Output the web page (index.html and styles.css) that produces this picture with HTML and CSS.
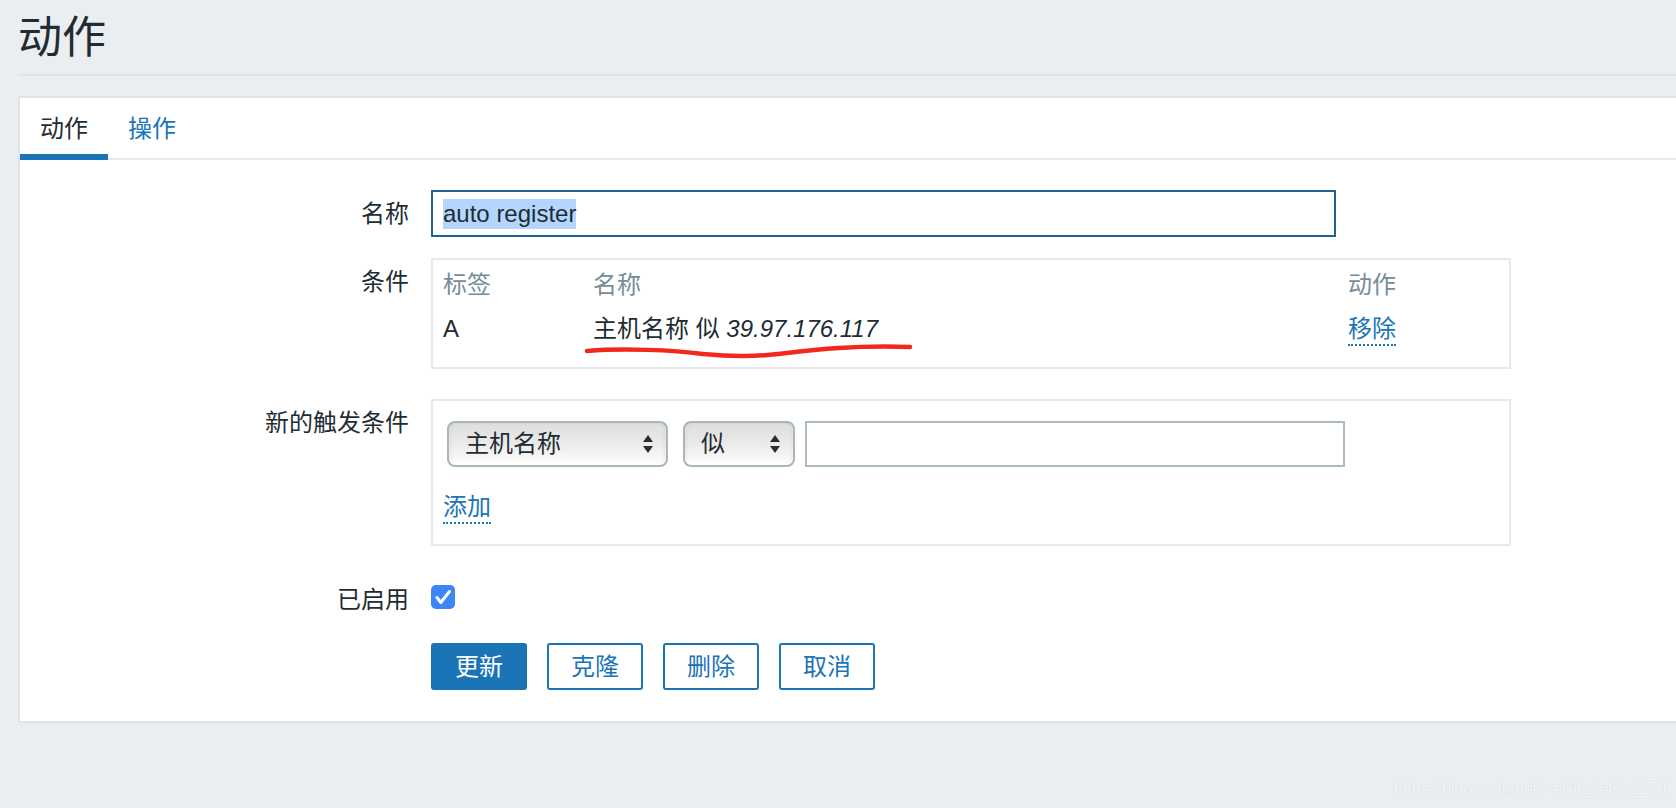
FILE: index.html
```html
<!DOCTYPE html>
<html lang="zh-CN">
<head>
<meta charset="utf-8">
<title>动作</title>
<link rel="stylesheet" href="styles.css">
</head>
<body>
<div class="page">
  <header class="page-header">
    <h1 class="page-title">动作</h1>
  </header>

  <main class="panel">
    <nav class="tabs">
      <a class="tab tab-active">动作</a>
      <a class="tab">操作</a>
    </nav>

    <div class="form">
      <div class="form-row row-name">
        <div class="label">名称</div>
        <div class="field">
          <div class="text-input name-input is-focused"><span class="selection">auto register</span></div>
        </div>
      </div>

      <div class="form-row row-conditions">
        <div class="label">条件</div>
        <div class="field">
          <div class="box cond-box">
            <div class="cond-grid">
              <div class="cond-head">标签</div>
              <div class="cond-head">名称</div>
              <div class="cond-head">动作</div>
              <div class="cond-cell">A</div>
              <div class="cond-cell">主机名称 似 <em>39.97.176.117</em></div>
              <div class="cond-cell"><a class="link-dotted">移除</a></div>
            </div>
            <svg class="scribble" viewBox="0 0 1076 106" width="1076" height="106">
              <path d="M154,91 C190,88 240,90 270,94 C300,97 320,97 345,94 C380,90 420,85 477,87" fill="none" stroke="#f3281c" stroke-width="4.5" stroke-linecap="round"/>
            </svg>
          </div>
        </div>
      </div>

      <div class="form-row row-new">
        <div class="label">新的触发条件</div>
        <div class="field">
          <div class="box new-box">
            <div class="new-controls">
              <div class="select select-type">
                <span>主机名称</span>
                <svg class="select-arrows" viewBox="0 0 10 18" width="10" height="18"><path d="M0,7 L5,0 L10,7 Z M0,11 L10,11 L5,18 Z" fill="#262f35"/></svg>
              </div>
              <div class="select select-op">
                <span>似</span>
                <svg class="select-arrows" viewBox="0 0 10 18" width="10" height="18"><path d="M0,7 L5,0 L10,7 Z M0,11 L10,11 L5,18 Z" fill="#262f35"/></svg>
              </div>
              <div class="text-input value-input"></div>
            </div>
            <a class="link-dotted">添加</a>
          </div>
        </div>
      </div>

      <div class="form-row row-enabled">
        <div class="label">已启用</div>
        <div class="field">
          <span class="checkbox">
            <svg viewBox="0 0 24 24" width="24" height="24"><path d="M6,12.5 L9.8,17.5 L18.5,6.5" fill="none" stroke="#fff" stroke-width="3" stroke-linecap="round" stroke-linejoin="round"/></svg>
          </span>
        </div>
      </div>

      <div class="form-row row-buttons">
        <div class="label"></div>
        <div class="field buttons">
          <button class="btn btn-primary">更新</button>
          <button class="btn">克隆</button>
          <button class="btn">删除</button>
          <button class="btn">取消</button>
        </div>
      </div>
    </div>
  </main>

  <div class="watermark">https://blog.csdn.net/weixin_44571270</div>
</div>
</body>
</html>
```

FILE: styles.css
```css
* { box-sizing: border-box; }

html, body {
  margin: 0;
  padding: 0;
  background: #ebeef0;
  height: 100%;
  overflow: hidden;
}

body {
  font-family: "Liberation Sans", "Noto Sans CJK SC", sans-serif;
  font-size: 24px;
  line-height: 30px;
  color: #1f2c33;
}

.page {
  padding-left: 18px;
  min-height: 808px;
}

.page-header {
  padding-top: 12px;
  padding-bottom: 10px;
  border-bottom: 2px solid #dfe4e7;
}

.page-title {
  margin: 0;
  font-size: 44px;
  line-height: 52px;
  font-weight: normal;
  color: #1f2c33;
}

.panel {
  margin-top: 20px;
  background: #fff;
  border: 2px solid #dfe4e7;
  border-right: none;
  padding-bottom: 31px;
}

.tabs {
  display: flex;
  border-bottom: 2px solid #e5e9ec;
}

.tab {
  padding: 16px 20px 10px;
  line-height: 30px;
  color: #1a75b9;
  border-bottom: 6px solid transparent;
  margin-bottom: -2px;
}

.tab-active {
  color: #1f2c33;
  border-bottom-color: #1a74b5;
}

.form {
  padding-top: 30px;
}

.form-row {
  display: grid;
  grid-template-columns: 389px 1fr;
  column-gap: 22px;
  align-items: start;
}

.label {
  text-align: right;
  padding-top: 9px;
  line-height: 30px;
}

.row-conditions { margin-top: 21px; }
.row-new { margin-top: 30px; }
.row-enabled { margin-top: 39px; }
.row-enabled .label { padding-top: 0; }
.row-buttons { margin-top: 28px; }

.text-input {
  height: 47px;
  border: 2px solid #acbbc2;
  background: #fff;
  padding: 0 10px;
  display: flex;
  align-items: center;
}

.name-input {
  width: 905px;
}

.is-focused {
  border-color: #22628f;
}

.selection {
  background: #b4d5fd;
  line-height: 30px;
}

.box {
  position: relative;
  width: 1080px;
  border: 2px solid #e5e9ec;
  padding: 10px 10px 21px;
}

.cond-grid {
  display: grid;
  grid-template-columns: 150px 1fr 151px;
  row-gap: 14px;
  line-height: 30px;
}

.cond-head {
  color: #768d99;
}

.cond-cell em {
  font-style: italic;
}

.link-dotted {
  display: inline-block;
  line-height: 30px;
  color: #1a75b9;
  border-bottom: 2px dotted #1a75b9;
}

.scribble {
  position: absolute;
  left: 0;
  top: 0;
  overflow: visible;
  pointer-events: none;
}

.new-box {
  padding-top: 11px;
  padding-bottom: 20px;
}

.new-controls {
  display: flex;
  margin-top: 9px;
  margin-bottom: 25px;
}

.select {
  height: 46px;
  display: flex;
  align-items: center;
  justify-content: space-between;
  border: 2px solid #a8b6bd;
  border-radius: 8px;
  padding: 0 13px 0 16px;
  background: linear-gradient(to bottom, #dedede 0%, #e9e9e9 45%, #f6f6f6 80%, #ffffff 100%);
  box-shadow: inset 0 -2px 2px rgba(255,255,255,0.9), inset 2px 0 3px rgba(0,0,0,0.05), inset -2px 0 3px rgba(0,0,0,0.05);
  color: #1f2c33;
}

.select-type {
  width: 221px;
  margin-left: 4px;
}

.select-op {
  width: 112px;
  margin-left: 15px;
}

.value-input {
  width: 540px;
  height: 46px;
  margin-left: 10px;
}

.checkbox {
  display: block;
  width: 24px;
  height: 24px;
  border-radius: 5px;
  background: #3d86f6;
}

.checkbox svg { display: block; }

.buttons {
  display: flex;
  gap: 20px;
}

.btn {
  height: 47px;
  padding: 0 22px;
  border: 2px solid #1a74b5;
  border-radius: 3px;
  background: #fff;
  color: #1a74b5;
  font-family: "Liberation Sans", "Noto Sans CJK SC", sans-serif;
  font-size: 24px;
  line-height: 30px;
}

.btn-primary {
  background: #1a74b5;
  color: #fff;
}

.watermark {
  position: absolute;
  right: 10px;
  top: 780px;
  font-size: 16px;
  line-height: 18px;
  color: rgba(255,255,255,0.85);
  text-shadow: 0 0 1px rgba(120,130,140,0.35);
}
```
